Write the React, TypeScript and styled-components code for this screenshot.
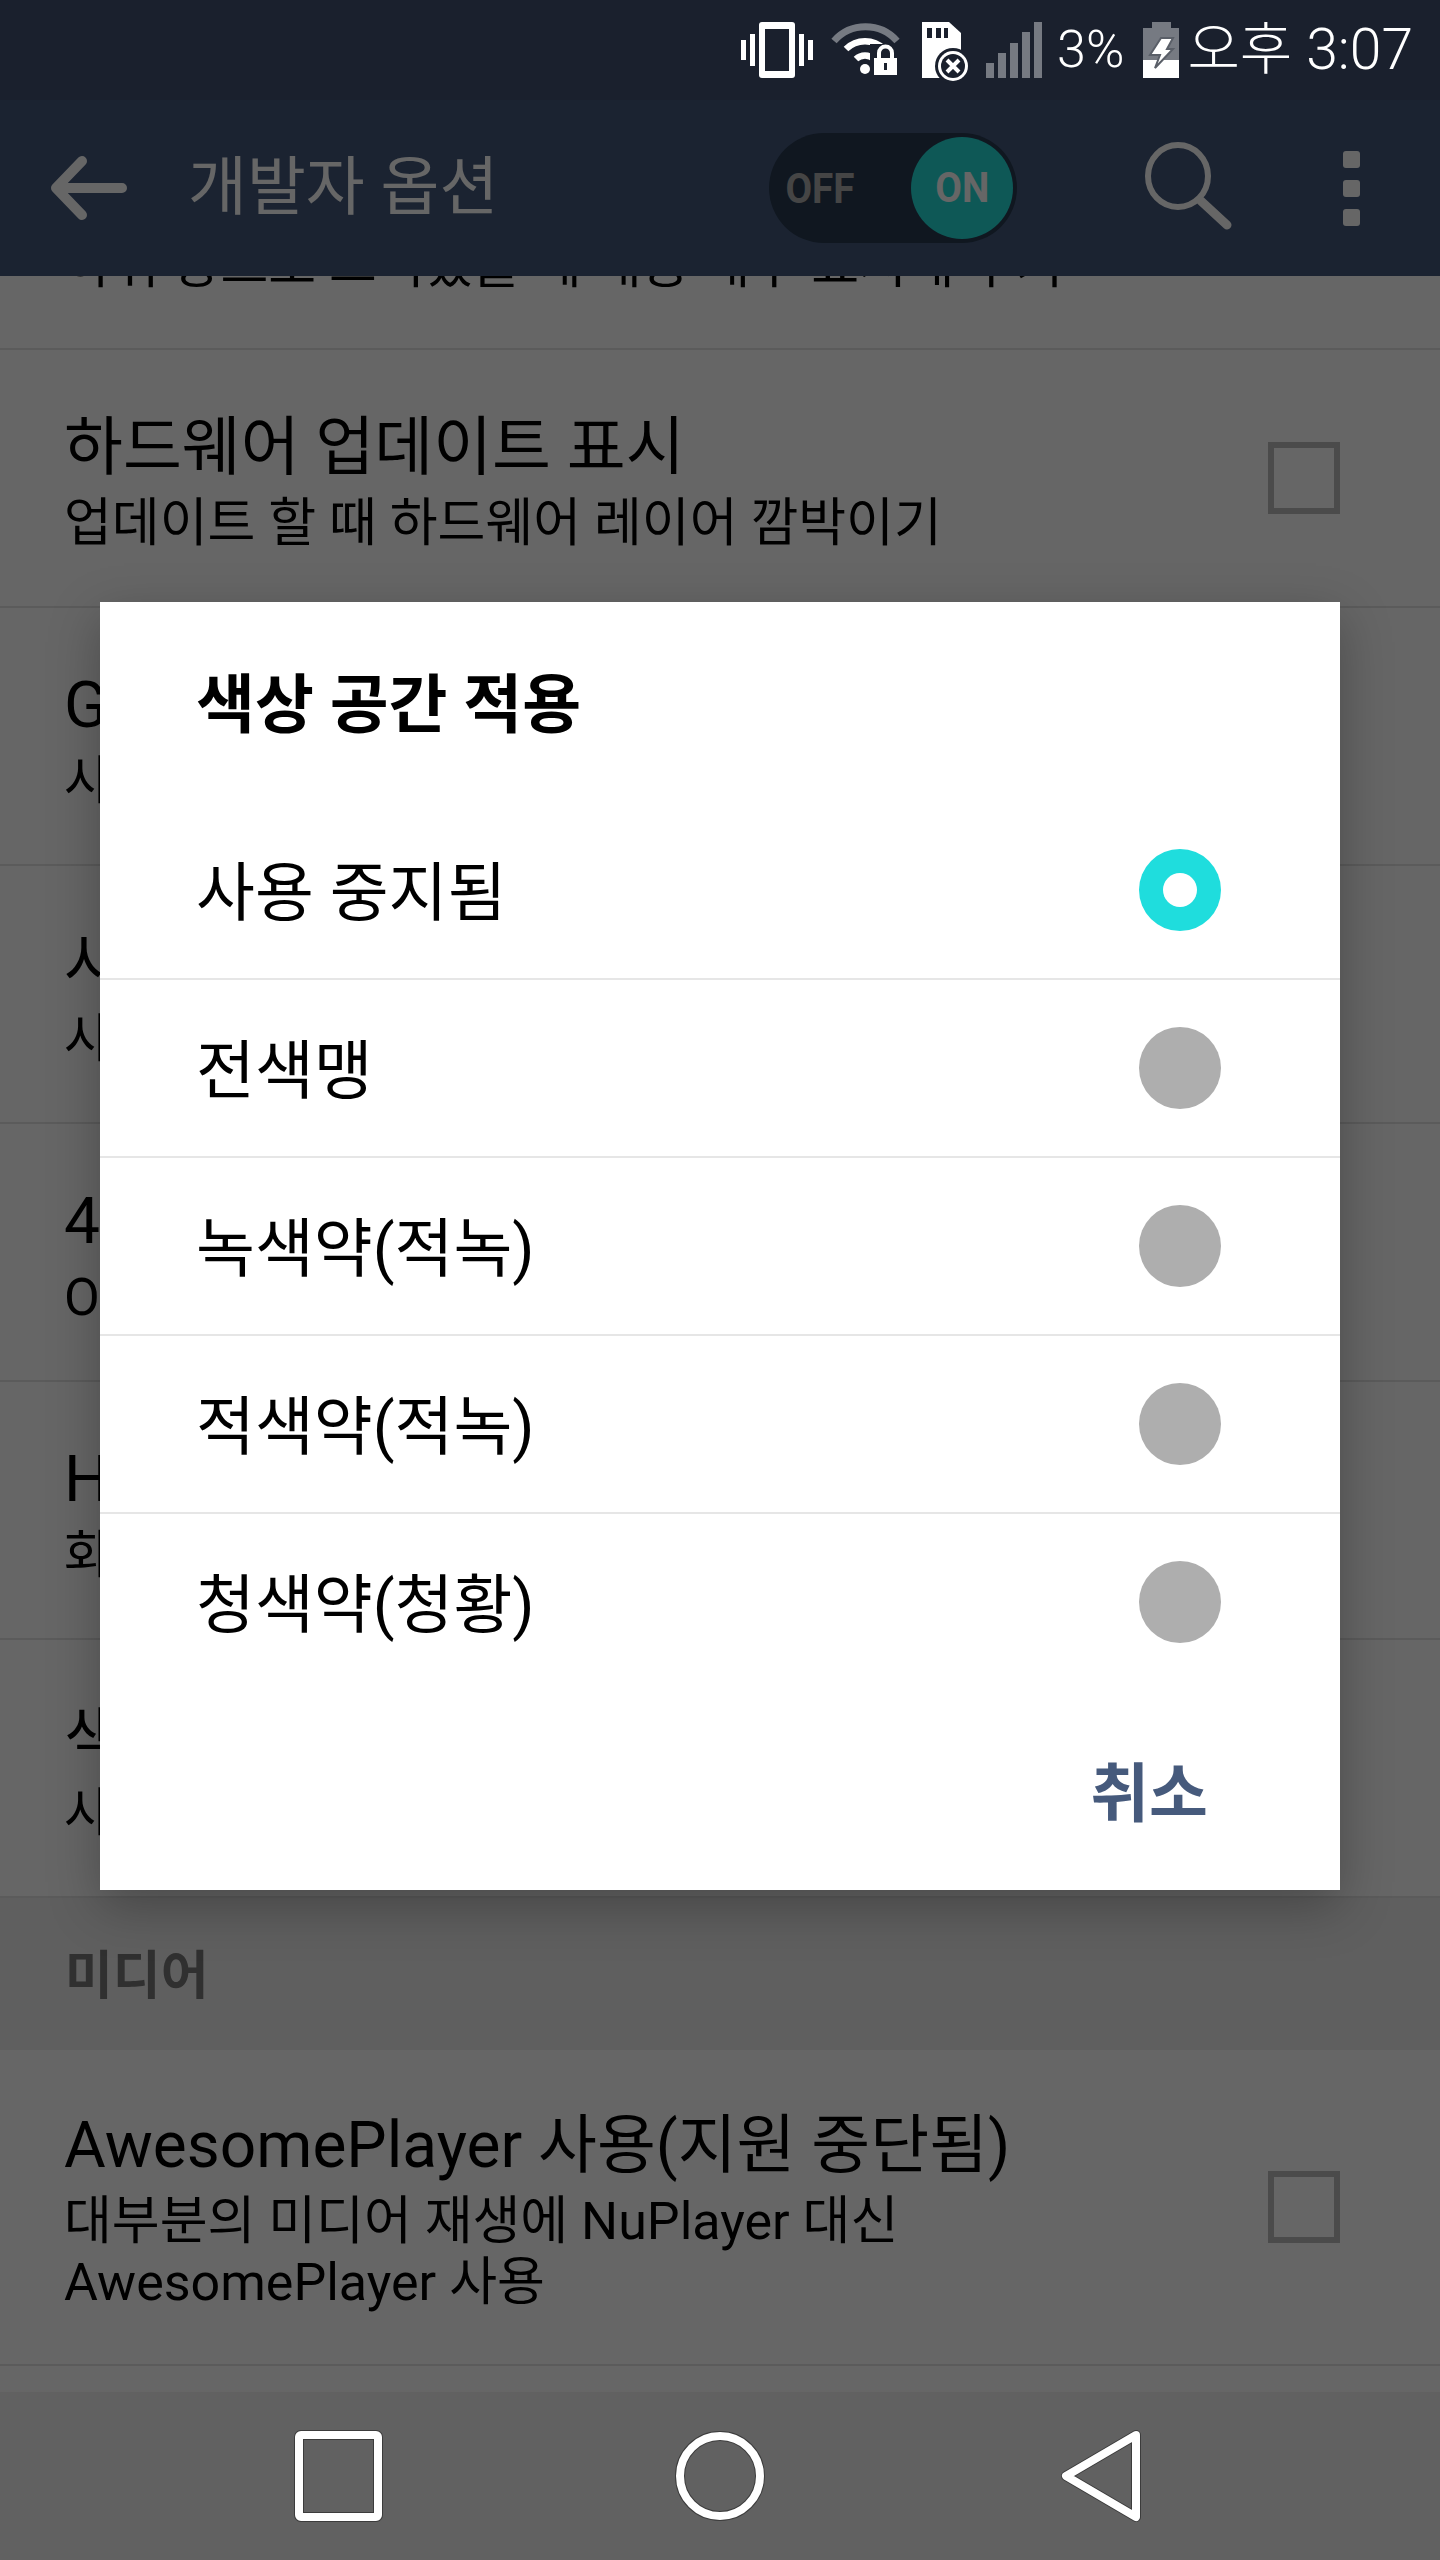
import styled, { createGlobalStyle } from 'styled-components';

const GlobalStyle = createGlobalStyle`
  html, body {
    margin: 0;
    padding: 0;
    background: #666;
  }
  * {
    box-sizing: border-box;
  }
`;

const FONT = `Roboto, "Noto Sans CJK KR", sans-serif`;

const Screen = styled.div`
  position: relative;
  width: 1440px;
  height: 2560px;
  display: flex;
  flex-direction: column;
  overflow: hidden;
  font-family: ${FONT};
  color: #000;
  background: #fff;
`;

const StatusBar = styled.div`
  flex: 0 0 100px;
  display: flex;
  align-items: center;
  justify-content: flex-end;
  padding: 0 27px 0 0;
  background: #1a202d;
  color: #fff;
`;

const StatusIcon = styled.svg<{ $gap: number }>`
  display: block;
  flex: none;
  overflow: visible;
  margin-left: ${(p) => p.$gap}px;
`;

const StatusText = styled.span<{ $gap: number; $size: number }>`
  margin-left: ${(p) => p.$gap}px;
  font-size: ${(p) => p.$size}px;
  font-weight: 300;
  line-height: 100px;
  white-space: nowrap;
`;

const AppBar = styled.header`
  position: relative;
  z-index: 1;
  flex: 0 0 176px;
  display: flex;
  align-items: center;
  background: #44587b;
  color: #fff;
`;

const BackIcon = styled.svg`
  flex: none;
  margin-left: 44px;
`;

const AppTitle = styled.h1`
  flex: none;
  width: 581px;
  margin: 0 0 0 54px;
  font-size: 64px;
  font-weight: 400;
  line-height: 1;
  white-space: nowrap;
`;

const Toggle = styled.div`
  position: relative;
  flex: none;
  width: 248px;
  height: 110px;
  border-radius: 55px;
  background: #283a50;
`;

const ToggleKnob = styled.div`
  position: absolute;
  top: 4px;
  right: 4px;
  width: 102px;
  height: 102px;
  display: flex;
  align-items: center;
  justify-content: center;
  border-radius: 50%;
  background: #23dcd7;
`;

const ToggleLabel = styled.span<{ $muted?: boolean }>`
  display: block;
  font-size: 42px;
  font-weight: 700;
  line-height: 1;
  transform: scaleX(0.92);
  color: ${(p) => (p.$muted ? '#adadad' : '#fff')};
`;

const ToggleOff = styled(ToggleLabel)`
  position: absolute;
  top: 35px;
  left: 1px;
  width: 100px;
  text-align: center;
`;

const SearchIcon = styled.svg`
  flex: none;
  margin: 0 0 4px 128px;
`;

const MoreDots = styled.div`
  flex: none;
  display: flex;
  flex-direction: column;
  gap: 12px;
  margin-left: 110px;
`;

const Dot = styled.span`
  display: block;
  width: 17px;
  height: 17px;
  border-radius: 3px;
  background: #fff;
`;

const List = styled.main`
  flex: 1;
  min-height: 0;
  overflow: hidden;
`;

const Row = styled.div<{ $tall?: boolean }>`
  height: ${(p) => (p.$tall ? 316 : 258)}px;
  display: flex;
  align-items: center;
  justify-content: space-between;
  padding: 0 100px 0 64px;
  border-bottom: 2px solid #e4e4e4;

  &:first-child {
    margin-top: -184px;
  }
`;

const RowText = styled.div`
  min-width: 0;
  padding-top: 6px;
`;

const RowTitle = styled.div`
  font-size: 64px;
  line-height: 78px;
  white-space: nowrap;
`;

const RowSub = styled.div`
  margin-top: 6px;
  font-size: 52px;
  line-height: 61px;
  white-space: pre-line;
`;

const Checkbox = styled.span`
  flex: none;
  display: block;
  width: 72px;
  height: 72px;
  border: 6px solid #bbb;
`;

const SectionHeader = styled.div`
  height: 152px;
  display: flex;
  align-items: center;
  padding: 0 0 6px 65px;
  background: #eee;
  color: #787878;
  font-size: 52px;
  font-weight: 700;
`;

const NavBar = styled.nav`
  flex: 0 0 168px;
  display: flex;
  align-items: center;
  justify-content: center;
  gap: 286px;
  background: #616161;
`;

const NavIcon = styled.svg`
  display: block;
  flex: none;
`;

const Scrim = styled.div`
  position: absolute;
  top: 100px;
  left: 0;
  width: 1440px;
  height: 2292px;
  z-index: 2;
  display: flex;
  justify-content: center;
  align-items: flex-start;
  padding-top: 502px;
  background: rgba(0, 0, 0, 0.6);
`;

const Dialog = styled.section`
  width: 1240px;
  height: 1288px;
  display: flex;
  flex-direction: column;
  background: #fff;
  box-shadow: 0 16px 48px rgba(0, 0, 0, 0.28);
`;

const DialogTitle = styled.h2`
  flex: 0 0 200px;
  display: flex;
  align-items: center;
  margin: 0;
  padding: 0 0 6px 96px;
  font-size: 64px;
  font-weight: 700;
`;

const Option = styled.div<{ $last?: boolean }>`
  flex: 0 0 178px;
  display: flex;
  align-items: center;
  justify-content: space-between;
  padding: 0 119px 0 96px;
  font-size: 64px;
  border-bottom: 2px solid ${(p) => (p.$last ? 'transparent' : '#e6e6e6')};
`;

const OptionLabel = styled.span`
  margin-bottom: 6px;
`;

const Radio = styled.span<{ $selected?: boolean }>`
  flex: none;
  width: 82px;
  height: 82px;
  display: flex;
  align-items: center;
  justify-content: center;
  border-radius: 50%;
  background: ${(p) => (p.$selected ? '#1fdddd' : '#aeaeae')};

  &::after {
    content: '';
    display: ${(p) => (p.$selected ? 'block' : 'none')};
    width: 34px;
    height: 34px;
    border-radius: 50%;
    background: #fff;
  }
`;

const DialogFooter = styled.div`
  flex: 1;
  display: flex;
  align-items: center;
  justify-content: flex-end;
  padding: 0 132px 6px 0;
`;

const CancelButton = styled.button`
  padding: 0;
  border: 0;
  background: none;
  font-family: ${FONT};
  font-size: 64px;
  font-weight: 700;
  color: #465a7c;
`;

const ICON_GREY = '#767a82';
const BAR_BG = '#1a202d';

const VibrateIcon = () => (
  <StatusIcon $gap={0} width={72} height={56} viewBox="0 0 72 56">
    <rect x={18} y={0} width={36} height={56} rx={3} fill="#fff" />
    <rect x={24} y={7} width={24} height={42} fill={BAR_BG} />
    <rect x={0} y={18} width={5} height={20} fill="#fff" />
    <rect x={9} y={12} width={5} height={32} fill="#fff" />
    <rect x={58} y={12} width={5} height={32} fill="#fff" />
    <rect x={67} y={18} width={5} height={20} fill="#fff" />
  </StatusIcon>
);

const WifiIcon = () => (
  <StatusIcon $gap={19} width={67} height={56} viewBox="0 0 67 56">
    <path d="M2 19 A42 42 0 0 1 65 19" fill="none" stroke={ICON_GREY} strokeWidth={7} />
    <path d="M14 27 A27 27 0 0 1 52 27" fill="none" stroke="#fff" strokeWidth={6.5} />
    <path d="M24 37 A13 13 0 0 1 42 37" fill="none" stroke="#fff" strokeWidth={6.5} />
    <circle cx={33} cy={47} r={5} fill="#fff" />
    <rect x={38} y={22} width={29} height={34} fill={BAR_BG} />
    <rect x={42} y={36} width={23} height={17} fill="#fff" />
    <path d="M47 36 V31 A6 6 0 0 1 60 31 V36" fill="none" stroke="#fff" strokeWidth={4} />
    <rect x={52} y={41} width={3} height={7} fill={BAR_BG} />
  </StatusIcon>
);

const SdIcon = () => (
  <StatusIcon $gap={23} width={39} height={56} viewBox="0 0 39 56">
    <path d="M0 0 H27 L39 11 V56 H0 Z" fill="#fff" />
    <rect x={5} y={6} width={5} height={10} fill={BAR_BG} />
    <rect x={14} y={6} width={5} height={10} fill={BAR_BG} />
    <rect x={22} y={6} width={4} height={10} fill={BAR_BG} />
    <circle cx={31} cy={44} r={18} fill={BAR_BG} />
    <circle cx={31} cy={44} r={15} fill="#fff" />
    <circle cx={31} cy={44} r={12} fill={BAR_BG} />
    <path d="M25 38 L37 50 M37 38 L25 50" stroke="#fff" strokeWidth={4} />
  </StatusIcon>
);

const SignalIcon = () => (
  <StatusIcon $gap={25} width={56} height={56} viewBox="0 0 56 56">
    <rect x={0} y={41} width={8} height={15} fill={ICON_GREY} />
    <rect x={12} y={31} width={8} height={25} fill={ICON_GREY} />
    <rect x={24} y={21} width={8} height={35} fill={ICON_GREY} />
    <rect x={36} y={10} width={8} height={46} fill={ICON_GREY} />
    <rect x={48} y={0} width={8} height={56} fill={ICON_GREY} />
  </StatusIcon>
);

const BatteryIcon = () => (
  <StatusIcon $gap={19} width={36} height={56} viewBox="0 0 36 56">
    <rect x={9} y={0} width={19} height={6} fill={ICON_GREY} />
    <rect x={0} y={6} width={36} height={32} fill={ICON_GREY} />
    <rect x={0} y={38} width={36} height={18} fill="#fff" />
    <path d="M18 16 H30 L24 27 H30 L12 46 L17 33 H7 Z" fill="#fff" stroke="#5a5f68" strokeWidth={2} />
  </StatusIcon>
);

const rows = [
  { title: 'GPU 보기 업데이트 표시', sub: '하위 창으로 그려졌을 때 내용 내부 표시해 주기' },
  { title: '하드웨어 업데이트 표시', sub: '업데이트 할 때 하드웨어 레이어 깜박이기', check: true },
  { title: 'GPU 오버드로 디버그', sub: '사용 안 함' },
  { title: '사각형이 아닌 클립 작업 디버그', sub: '사용 안 함' },
  { title: '4x MSAA 사용', sub: 'OpenGL ES 2.0 앱에서 4x MSAA 사용' },
  { title: 'HW 오버레이 사용 중지', sub: '화면 합성 시 항상 GPU 사용' },
  { title: '색상 공간 적용', sub: '사용 중지됨' },
];

const options = ['사용 중지됨', '전색맹', '녹색약(적녹)', '적색약(적녹)', '청색약(청황)'];

export default function App() {
  return (
    <Screen>
      <GlobalStyle />
      <StatusBar>
        <VibrateIcon />
        <WifiIcon />
        <SdIcon />
        <SignalIcon />
        <StatusText $gap={15} $size={52}>3%</StatusText>
        <BatteryIcon />
        <StatusText $gap={8} $size={57}>오후 3:07</StatusText>
      </StatusBar>
      <AppBar>
        <BackIcon width={90} height={70} viewBox="0 0 90 70">
          <path
            d="M38 8 L12 35 L38 62 M12 35 H78"
            fill="none"
            stroke="#fff"
            strokeWidth={10}
            strokeLinecap="round"
            strokeLinejoin="round"
          />
        </BackIcon>
        <AppTitle>개발자 옵션</AppTitle>
        <Toggle>
          <ToggleOff $muted>OFF</ToggleOff>
          <ToggleKnob>
            <ToggleLabel>ON</ToggleLabel>
          </ToggleKnob>
        </Toggle>
        <SearchIcon width={88} height={90} viewBox="0 0 88 90">
          <ellipse cx={33} cy={35} rx={30} ry={31} fill="none" stroke="#fff" strokeWidth={6} />
          <path d="M56 60 L82 84" stroke="#fff" strokeWidth={9} strokeLinecap="round" />
        </SearchIcon>
        <MoreDots>
          <Dot />
          <Dot />
          <Dot />
        </MoreDots>
      </AppBar>
      <List>
        {rows.map((row) => (
          <Row key={row.title}>
            <RowText>
              <RowTitle>{row.title}</RowTitle>
              <RowSub>{row.sub}</RowSub>
            </RowText>
            {row.check && <Checkbox />}
          </Row>
        ))}
        <SectionHeader>미디어</SectionHeader>
        <Row $tall>
          <RowText>
            <RowTitle>AwesomePlayer 사용(지원 중단됨)</RowTitle>
            <RowSub>{'대부분의 미디어 재생에 NuPlayer 대신\nAwesomePlayer 사용'}</RowSub>
          </RowText>
          <Checkbox />
        </Row>
      </List>
      <NavBar>
        <NavIcon width={96} height={96} viewBox="0 0 96 96">
          <rect x={9} y={7} width={79} height={82} rx={2} fill="none" stroke="#3c3c3c" strokeWidth={10} />
          <rect x={9} y={7} width={79} height={82} rx={2} fill="none" stroke="#fff" strokeWidth={8} />
        </NavIcon>
        <NavIcon width={96} height={96} viewBox="0 0 96 96">
          <circle cx={48} cy={48} r={40} fill="none" stroke="#3c3c3c" strokeWidth={10} />
          <circle cx={48} cy={48} r={40} fill="none" stroke="#fff" strokeWidth={8} />
        </NavIcon>
        <NavIcon width={96} height={96} viewBox="0 0 96 96">
          <path d="M82 7 L12 48 L82 89 Z" fill="none" stroke="#3c3c3c" strokeWidth={10} strokeLinejoin="round" />
          <path d="M82 7 L12 48 L82 89 Z" fill="none" stroke="#fff" strokeWidth={8} strokeLinejoin="round" />
        </NavIcon>
      </NavBar>
      <Scrim>
        <Dialog>
          <DialogTitle>색상 공간 적용</DialogTitle>
          {options.map((label, i) => (
            <Option key={label} $last={i === options.length - 1}>
              <OptionLabel>{label}</OptionLabel>
              <Radio $selected={i === 0} />
            </Option>
          ))}
          <DialogFooter>
            <CancelButton>취소</CancelButton>
          </DialogFooter>
        </Dialog>
      </Scrim>
    </Screen>
  );
}
